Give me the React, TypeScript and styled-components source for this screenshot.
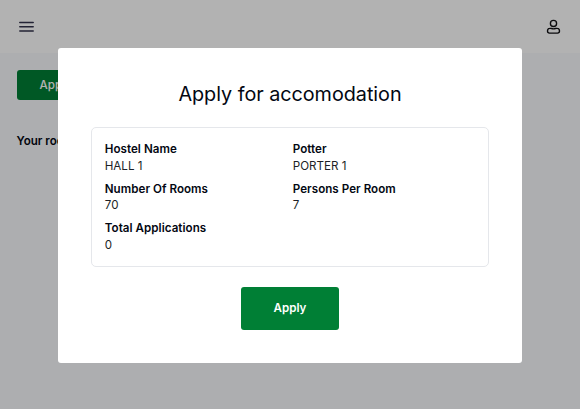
import React from "react";
import styled, { createGlobalStyle } from "styled-components";

const GlobalStyle = createGlobalStyle`
  * { box-sizing: border-box; }
  body {
    margin: 0;
    overflow: hidden;
    font-family: Inter, "Liberation Sans", sans-serif;
    color: #030712;
  }
`;

const Page = styled.div`
  height: 100vh;
  background: #f8fafd;
`;

const Header = styled.header`
  height: 53px;
  padding: 0 18px;
  display: flex;
  align-items: center;
  justify-content: space-between;
  background: #fff;
`;

const IconButton = styled.button`
  display: flex;
  padding: 0;
  border: 0;
  background: none;
`;

const Content = styled.main`
  display: flex;
  flex-direction: column;
  align-items: flex-start;
  gap: 33px;
  padding: 17px 16.5px;
`;

const Button = styled.button<{ $large?: boolean }>`
  height: ${(p) => (p.$large ? "43px" : "30px")};
  width: ${(p) => (p.$large ? "98px" : "150px")};
  padding: ${(p) => (p.$large ? "0" : "0 23px")};
  text-align: ${(p) => (p.$large ? "center" : "left")};
  border: 0;
  border-radius: 3px;
  background: #007f35;
  color: #fff;
  font: ${(p) => (p.$large ? 600 : 500)} 11.6px Inter, sans-serif;
`;

const SectionTitle = styled.h2`
  margin: 0;
  font-size: 11.6px;
  line-height: 16px;
  font-weight: 600;
`;

const Overlay = styled.div`
  position: fixed;
  inset: 0;
  padding: 48px 57.75px 46.5px;
  background: rgba(0, 0, 0, 0.3);
`;

const Dialog = styled.section`
  height: 100%;
  padding: 33px;
  display: flex;
  flex-direction: column;
  align-items: center;
  border-radius: 3px;
  background: #fff;
`;

const Title = styled.h1`
  margin: 0 0 20px;
  font-size: 19.8px;
  line-height: 26px;
  font-weight: 400;
  letter-spacing: -0.03px;
`;

const Details = styled.dl`
  width: 100%;
  height: 140px;
  margin: 0 0 20px;
  padding: 13px;
  display: grid;
  grid-template-columns: 180px 1fr;
  column-gap: 8px;
  row-gap: 7px;
  align-content: start;
  border: 1px solid #e5e7eb;
  border-radius: 5px;
`;

const Label = styled.dt`
  font-size: 11.6px;
  line-height: 16.5px;
  font-weight: 600;
  letter-spacing: 0.04px;
`;

const Value = styled.dd`
  margin: 0;
  font-size: 11.6px;
  line-height: 16px;
  color: #1c1f26;
`;

const details = [
  ["Hostel Name", "HALL 1"],
  ["Potter", "PORTER 1"],
  ["Number Of Rooms", "70"],
  ["Persons Per Room", "7"],
  ["Total Applications", "0"],
];

export default function App() {
  return (
    <>
      <GlobalStyle />
      <Page>
        <Header>
          <IconButton aria-label="Menu">
            <svg width="17" height="14" viewBox="0 0 17 14" fill="none" stroke="#33334c" strokeWidth="1.5" strokeLinecap="round">
              <path d="M1.8 2.4h13.4M1.8 6.7h13.4M1.8 11h13.4" />
            </svg>
          </IconButton>
          <IconButton aria-label="Account">
            <svg width="17" height="17" viewBox="0 0 17 17" fill="none" stroke="#101014" strokeWidth="1.35">
              <circle cx="8.5" cy="5.4" r="3.1" />
              <path d="M4.6 10.4C5.9 10.1 6.8 10.8 8.5 10.8S11.1 10.1 12.4 10.4C13.7 10.6 14.5 11.6 14.5 13C14.5 14.3 13.7 15.1 12.5 15.1H4.5C3.3 15.1 2.5 14.3 2.5 13C2.5 11.6 3.3 10.6 4.6 10.4Z" />
            </svg>
          </IconButton>
        </Header>
        <Content>
          <Button>Apply now</Button>
          <SectionTitle>Your rooms</SectionTitle>
        </Content>
      </Page>
      <Overlay>
        <Dialog role="dialog" aria-modal="true">
          <Title>Apply for accomodation</Title>
          <Details>
            {details.map(([label, value]) => (
              <div key={label}>
                <Label>{label}</Label>
                <Value>{value}</Value>
              </div>
            ))}
          </Details>
          <Button $large>Apply</Button>
        </Dialog>
      </Overlay>
    </>
  );
}
